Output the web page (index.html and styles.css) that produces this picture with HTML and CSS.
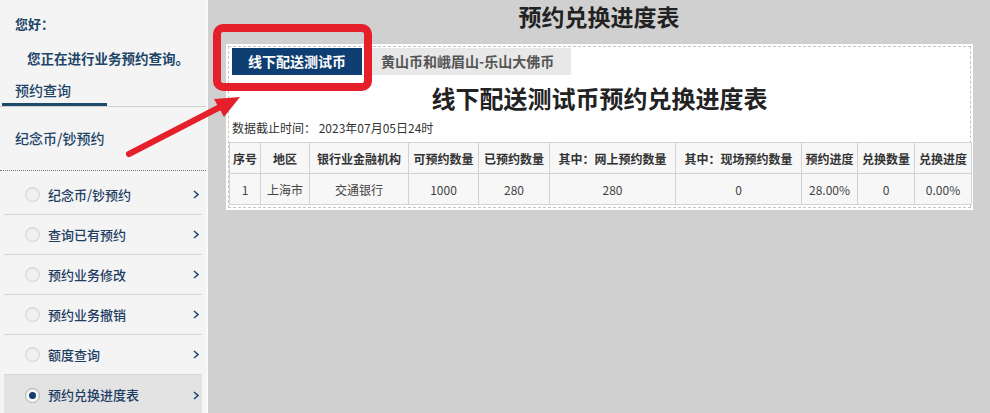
FILE: index.html
```html
<!DOCTYPE html>
<html lang="zh-CN">
<head>
<meta charset="utf-8">
<title>预约兑换进度表</title>
<link rel="stylesheet" href="styles.css">
</head>
<body>
<div class="page">
  <aside class="sidebar">
    <div class="greet">您好：</div>
    <div class="greet-msg">您正在进行业务预约查询。</div>
    <div class="section-tab"><span>预约查询</span></div>
    <div class="group-title">纪念币/钞预约</div>
    <ul class="menu">
      <li class="menu-item"><span class="radio"></span><span class="label">纪念币/钞预约</span><svg class="chev" width="6" height="9" viewBox="0 0 6 9"><polyline points="1,1 5,4.5 1,8" fill="none" stroke="#1e4a72" stroke-width="1.6"/></svg></li>
      <li class="menu-item"><span class="radio"></span><span class="label">查询已有预约</span><svg class="chev" width="6" height="9" viewBox="0 0 6 9"><polyline points="1,1 5,4.5 1,8" fill="none" stroke="#1e4a72" stroke-width="1.6"/></svg></li>
      <li class="menu-item"><span class="radio"></span><span class="label">预约业务修改</span><svg class="chev" width="6" height="9" viewBox="0 0 6 9"><polyline points="1,1 5,4.5 1,8" fill="none" stroke="#1e4a72" stroke-width="1.6"/></svg></li>
      <li class="menu-item"><span class="radio"></span><span class="label">预约业务撤销</span><svg class="chev" width="6" height="9" viewBox="0 0 6 9"><polyline points="1,1 5,4.5 1,8" fill="none" stroke="#1e4a72" stroke-width="1.6"/></svg></li>
      <li class="menu-item"><span class="radio"></span><span class="label">额度查询</span><svg class="chev" width="6" height="9" viewBox="0 0 6 9"><polyline points="1,1 5,4.5 1,8" fill="none" stroke="#1e4a72" stroke-width="1.6"/></svg></li>
      <li class="menu-item active"><span class="radio"></span><span class="label">预约兑换进度表</span><svg class="chev" width="6" height="9" viewBox="0 0 6 9"><polyline points="1,1 5,4.5 1,8" fill="none" stroke="#1e4a72" stroke-width="1.6"/></svg></li>
    </ul>
  </aside>
  <main class="main">
    <h1 class="main-title">预约兑换进度表</h1>
    <section class="panel">
      <div class="panel-inner">
        <div class="tabs">
          <div class="tab tab-active">线下配送测试币</div>
          <div class="tab">黄山币和峨眉山-乐山大佛币</div>
        </div>
        <h2 class="sheet-title">线下配送测试币预约兑换进度表</h2>
        <div class="cutoff">数据截止时间：&nbsp;2023年07月05日24时</div>
        <table class="grid">
          <colgroup>
            <col style="width:31px"><col style="width:49px"><col style="width:99px"><col style="width:70px"><col style="width:71px"><col style="width:126px"><col style="width:126px"><col style="width:56px"><col style="width:57px"><col style="width:57px">
          </colgroup>
          <thead>
            <tr><th>序号</th><th>地区</th><th>银行业金融机构</th><th>可预约数量</th><th>已预约数量</th><th>其中：网上预约数量</th><th>其中：现场预约数量</th><th>预约进度</th><th>兑换数量</th><th>兑换进度</th></tr>
          </thead>
          <tbody>
            <tr><td>1</td><td>上海市</td><td>交通银行</td><td>1000</td><td>280</td><td>280</td><td>0</td><td>28.00%</td><td>0</td><td>0.00%</td></tr>
          </tbody>
        </table>
      </div>
    </section>
  </main>
  <svg class="annot" width="990" height="413" viewBox="0 0 990 413">
    <rect x="217" y="28" width="151" height="59" rx="6" ry="6" fill="none" stroke="#e5202b" stroke-width="8"/>
    <line x1="129" y1="154" x2="222" y2="106" stroke="#e5202b" stroke-width="6" stroke-linecap="round"/>
    <polygon points="240,97 214,99 224,117" fill="#e5202b"/>
  </svg>
</div>
</body>
</html>
```
FILE: styles.css
```css
html, body {
  margin: 0;
  padding: 0;
}
body {
  width: 990px;
  height: 413px;
  overflow: hidden;
  background: #d0d0d0;
  font-family: "Noto Sans CJK SC", "Liberation Sans", sans-serif;
  color: #333;
}
.page {
  position: relative;
  display: flex;
  width: 990px;
  height: 413px;
}
.sidebar {
  width: 206px;
  flex: 0 0 206px;
  background: #f4f4f4;
  border-right: 2px solid #fafafa;
  color: #1d4568;
}
.greet {
  margin-top: 14px;
  padding-left: 15px;
  font-size: 13px;
  line-height: 20px;
  font-weight: 700;
}
.greet-msg {
  margin-top: 14px;
  padding-left: 27px;
  font-size: 13.5px;
  line-height: 20px;
  font-weight: 700;
}
.section-tab {
  margin-top: 12px;
  border-bottom: 1px solid #cfcfcf;
  height: 26px;
}
.section-tab span {
  display: block;
  width: 92px;
  margin-left: 2px;
  padding-left: 13px;
  font-size: 14px;
  line-height: 20px;
  height: 23px;
  border-bottom: 3px solid #1d4a6b;
  font-weight: 500;
}
.group-title {
  margin-top: 21px;
  padding-left: 15px;
  font-size: 14px;
  line-height: 20px;
  font-weight: 500;
  padding-bottom: 22px;
  border-bottom: 1px dotted #777;
}
.menu {
  list-style: none;
  margin: 4px 4px 0 4px;
  padding: 0;
}
.menu-item {
  display: flex;
  align-items: center;
  height: 39px;
  border-bottom: 1px solid #d6d6d6;
  padding-left: 21px;
  padding-right: 3px;
  color: #1e3d64;
}
.menu-item.active {
  background: #e3e3e3;
  border-bottom: none;
  height: 40px;
}
.radio {
  width: 13px;
  height: 13px;
  border: 1px solid #d2d2d2;
  border-radius: 50%;
  background: #f0f0f0;
  box-shadow: inset 0 1px 2px rgba(0, 0, 0, 0.06);
  flex: 0 0 auto;
  position: relative;
}
.menu-item.active .radio {
  border-color: #a9afb6;
  background: #f7f7f7;
}
.menu-item.active .radio::after {
  content: "";
  position: absolute;
  left: 3px;
  top: 3px;
  width: 7px;
  height: 7px;
  border-radius: 50%;
  background: #163e6b;
}
.label {
  margin-left: 8px;
  flex: 1;
  font-size: 13px;
  font-weight: 500;
  line-height: 20px;
}
.chev {
  flex: 0 0 auto;
}
.main {
  flex: 1;
  padding-left: 18px;
}
.main-title {
  margin: 0 0 11px -18px;
  text-align: center;
  font-size: 23px;
  line-height: 33px;
  font-weight: 700;
  color: #222;
}
.panel {
  width: 743px;
  background: #fff;
  padding: 2px;
}
.panel-inner {
  border: 1px dashed #c4c4c4;
  padding: 1px 0 2px 0;
}
.tabs {
  display: flex;
  gap: 6px;
  padding-left: 3px;
}
.tab {
  height: 27px;
  line-height: 27px;
  padding: 0 17px 0 13px;
  background: #e8e8e8;
  color: #555;
  font-size: 14px;
  font-weight: 700;
}
.tab-active {
  width: 104px;
  padding: 0 13px;
  text-align: center;
  background: #0f3e72;
  color: #fff;
}
.sheet-title {
  margin: 8px 0 0 0;
  text-align: center;
  font-size: 24px;
  line-height: 30px;
  font-weight: 700;
  color: #222;
}
.cutoff {
  margin-top: 6px;
  padding-left: 3px;
  font-size: 12px;
  line-height: 18px;
  color: #333;
}
.grid {
  margin-top: 5px;
  width: 742px;
  border-collapse: collapse;
  table-layout: fixed;
  font-size: 12px;
  color: #333;
}
.grid th, .grid td {
  border: 1px solid #d2d2d2;
  background: #f7f7f7;
  text-align: center;
  height: 30px;
  padding: 0;
  white-space: nowrap;
}
.grid th {
  font-weight: 700;
}
.grid td {
  color: #444;
}
.annot {
  position: absolute;
  left: 0;
  top: 0;
  pointer-events: none;
}
```
